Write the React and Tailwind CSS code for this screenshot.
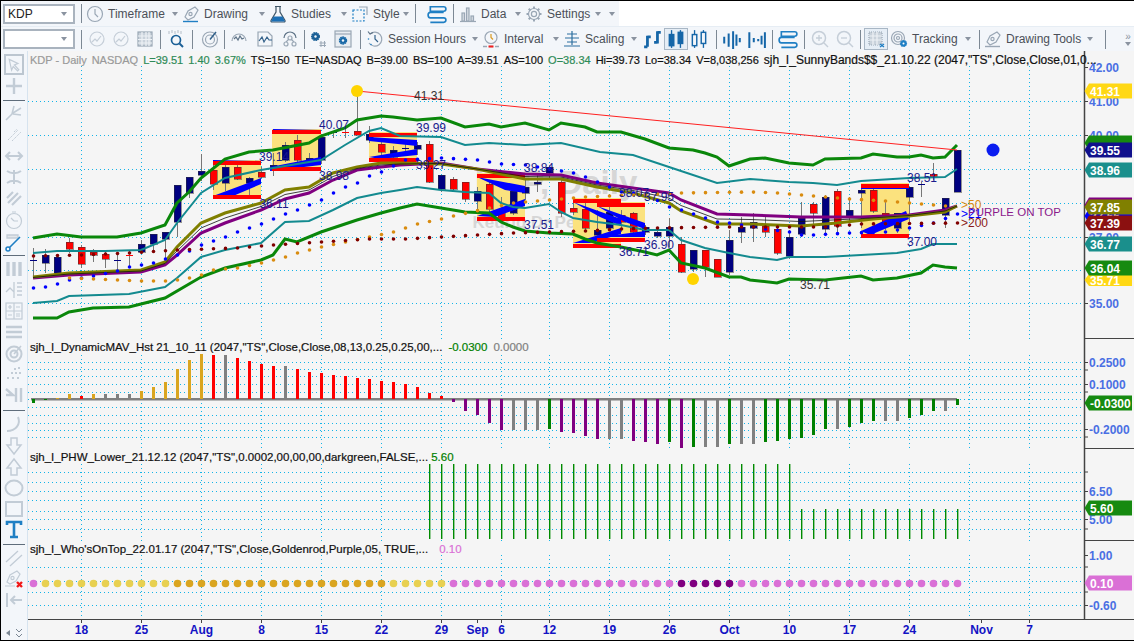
// App.jsx - charting workspace, KDP daily
const STEP = 12;
const barX = (i) => 33 + STEP * i;
const BARS = Array.from({ length: 78 }, (_, i) => i);

// piecewise line through [x, y] points
function lerp(pts, x) {
  if (x <= pts[0][0]) return pts[0][1];
  for (let k = 1; k < pts.length; k++) {
    if (x <= pts[k][0]) {
      const [x0, y0] = pts[k - 1];
      const [x1, y1] = pts[k];
      return y0 + ((y1 - y0) * (x - x0)) / (x1 - x0);
    }
  }
  return pts[pts.length - 1][1];
}

const toPoints = (pts) => pts.map((p) => p.join(",")).join(" ");

const upperGreen = [[33,238],[57,234],[81,237],[117,237],[141,233],[165,225],[177,203],[189,192],[201,178],[225,159],[249,152],[273,150],[309,143],[321,136],[345,128],[357,120],[381,116],[393,117],[417,120],[441,118],[465,127],[489,124],[501,127],[525,123],[549,130],[561,123],[585,127],[597,132],[621,132],[645,139],[669,148],[693,150],[705,153],[717,157],[729,166],[741,162],[750,159],[765,158],[789,163],[813,165],[825,159],[861,158],[873,154],[897,157],[909,157],[921,155],[933,158],[945,157],[957,145]];
const upperTeal = [[33,253],[57,251],[105,251],[141,250],[165,240],[177,223],[201,193],[225,178],[261,170],[321,160],[345,145],[369,131],[381,128],[400,136],[441,137],[465,145],[489,143],[525,145],[561,143],[600,152],[633,155],[669,167],[717,183],[750,179],[789,182],[813,183],[837,185],[861,181],[909,178],[945,177],[957,169]];
const lowerTeal = [[33,303],[57,301],[69,296],[129,294],[165,287],[177,278],[201,257],[225,250],[261,243],[285,222],[309,221],[333,210],[357,198],[381,193],[400,190],[417,187],[441,190],[465,192],[489,193],[501,203],[513,207],[525,208],[549,204],[561,212],[573,218],[597,222],[621,225],[645,230],[669,230],[681,240],[705,248],[729,253],[750,257],[777,260],[789,257],[825,257],[861,255],[897,253],[921,249],[933,244],[957,244]];
const lowerGreen = [[33,318],[57,318],[69,312],[93,308],[129,307],[165,298],[201,277],[225,268],[261,260],[273,255],[285,239],[297,242],[321,232],[357,220],[381,213],[400,208],[417,204],[441,208],[465,212],[489,213],[501,222],[513,227],[525,231],[549,233],[573,234],[585,239],[597,243],[621,247],[645,252],[657,255],[669,250],[681,263],[705,268],[729,277],[741,277],[750,280],[777,283],[789,279],[825,280],[861,276],[873,280],[897,278],[921,273],[933,265],[945,267],[957,268]];
const olive = [[33,277],[69,273],[141,270],[165,262],[177,247],[201,223],[225,213],[261,203],[285,190],[309,187],[333,173],[357,167],[381,163],[400,163],[441,164],[477,169],[525,179],[561,179],[597,187],[633,193],[669,203],[681,211],[717,224],[750,224],[801,226],[837,223],[873,219],[909,216],[945,212],[957,206]];
const purple = [[33,278],[69,275],[141,272],[165,265],[177,255],[201,233],[225,223],[261,210],[285,199],[309,193],[333,180],[357,170],[381,167],[400,165],[441,163],[477,169],[525,174],[561,175],[597,183],[633,188],[669,193],[681,200],[717,214],[750,215],[801,217],[861,217],[909,215],[945,210],[957,206]];
const blueDots = [[33,288],[45,287],[57,284],[69,280],[81,278],[93,276],[117,271],[129,267],[141,265],[153,263],[177,255],[189,251],[201,245],[213,241],[225,237],[237,232],[249,228],[261,224],[273,219],[285,214],[297,210],[309,205],[321,200],[333,193],[345,187],[357,183],[369,176],[381,172],[405,160],[441,158],[477,160],[501,164],[525,165],[549,169],[573,173],[585,177],[597,182],[609,187],[621,192],[645,194],[669,207],[681,210],[717,222],[729,223],[765,229],[789,232],[801,235],[813,235],[849,233],[885,232],[909,228],[933,223],[957,214]];
const orangeDots = [[69,278],[93,279],[117,280],[141,281],[165,281],[177,280],[189,278],[201,275],[213,270],[237,268],[261,263],[285,257],[297,253],[321,247],[345,242],[369,237],[393,232],[405,228],[417,224],[441,219],[453,216],[489,208],[513,203],[549,200],[585,197],[633,195],[681,193],[750,192],[777,193],[813,196],[849,199],[885,201],[921,204],[945,206]];
const maroonDots = [[33,256],[81,255],[129,253],[177,250],[237,248],[273,245],[321,242],[369,239],[405,239],[441,237],[477,235],[513,233],[549,232],[585,231],[621,229],[657,228],[729,227],[825,227],[861,224],[957,223]];

// [bar, colour n/r, wickTop, bodyTop, bodyBottom, wickBottom]
const candles = [
  [0,"n",248,260,261,276],[1,"n",249,255,263,273],[2,"n",254,257,273,274],[3,"r",238,242,249,253],
  [4,"r",245,247,264,268],[5,"r",249,252,255,262],[6,"r",251,254,259,268],[7,"n",252,260,261,271],
  [8,"r",250,255,256,268],[9,"n",240,244,252,254],[10,"n",234,234,244,251],[11,"n",232,232,239,262],
  [12,"n",185,185,222,237],[13,"n",177,177,193,198],[14,"n",154,171,175,181],[15,"r",160,170,184,190],
  [16,"n",162,167,183,191],[17,"r",163,167,179,180],[18,"n",177,178,183,196],[19,"r",167,172,177,178],
  [20,"n",153,165,170,176],[21,"n",142,145,160,162],[22,"r",135,140,160,162],[23,"n",153,158,162,164],
  [24,"n",134,137,160,164],[25,"n",131,132,133,138],[26,"r",128,132,133,138],[27,"r",95,131,135,135],
  [28,"n",126,134,140,143],[29,"r",140,144,152,155],[30,"n",146,150,157,160],[31,"n",143,148,149,155],
  [32,"n",142,145,149,155],[33,"r",141,144,182,183],[34,"n",175,175,189,192],[35,"r",177,179,189,190],
  [36,"r",182,182,199,202],[37,"n",187,191,201,213],[38,"r",182,184,209,212],[39,"r",197,212,218,218],
  [40,"n",187,191,213,215],[41,"n",180,187,193,200],[42,"n",175,182,184,192],[43,"n",165,167,173,180],
  [44,"r",180,182,213,217],[45,"r",197,208,212,215],[46,"r",203,209,228,230],[47,"n",210,230,235,239],
  [48,"n",205,212,228,230],[49,"r",210,215,222,232],[50,"r",212,213,232,233],[51,"n",225,227,232,235],
  [52,"n",227,232,236,238],[53,"n",218,227,236,247],[54,"r",237,244,272,273],[55,"n",250,250,269,272],
  [56,"r",250,250,267,277],[57,"r",259,259,277,277],[58,"n",230,240,272,275],[59,"n",217,227,232,243],
  [60,"n",213,222,228,242],[61,"r",217,226,232,237],[62,"r",227,229,253,255],[63,"n",230,237,256,259],
  [64,"n",202,218,234,237],[65,"r",202,204,213,227],[66,"n",195,197,229,233],[67,"r",189,191,226,232],
  [68,"n",197,210,216,223],[69,"n",187,190,193,228],[70,"r",188,190,211,213],[71,"r",200,213,226,230],
  [72,"n",213,213,228,233],[73,"n",187,187,197,223],[74,"n",182,184,185,197],[75,"r",163,174,177,180],
  [76,"n",198,198,215,228],[77,"n",150,150,192,192],
];

// signal boxes: x1, x2, top, bottom and the blue wedges on them
const boxes = [
  { x: [213,261], y: [160,199], top: "213,160 261,161 213,163", low: "213,196 261,178 261,184 226,199" },
  { x: [272,321], y: [129,171], top: "273,129 321,130 273,131", low: "270,167 321,157 321,165 270,171" },
  { x: [369,417], y: [132,162], top: "369,137 417,140 417,146 369,141", low: "369,157 417,149 417,155 380,159" },
  { x: [477,525], y: [173,221], top: "477,177 525,186 525,193 505,190", low: "477,216 525,199 525,206 495,217" },
  { x: [573,621], y: [198,248], top: "573,202 621,219 621,226 600,217", low: "573,243 621,228 621,234 590,243" },
  { x: [597,645], y: [202,242], top: "597,206 645,223 645,229 625,222", low: "600,237 645,231 645,237 610,237" },
  { x: [861,909], y: [183,238], top: "861,187 909,187 909,189 861,189", low: "861,231 906,211 909,219 870,235" },
];

const chartLabels = [
  ["41.31",429,96,"#333333"],["40.07",334,125,"#1a1a8c"],["39.14",274,157,"#1a1a8c"],["38.98",334,176,"#1a1a8c"],
  ["36.11",274,204,"#1a1a8c"],["39.99",431,128,"#1a1a8c"],["39.27",431,165,"#1a1a8c"],["38.84",539,168,"#1a1a8c"],
  ["37.51",539,225,"#1a1a8c"],["38.07",634,193,"#1a1a8c"],["37.95",659,197,"#1a1a8c"],["36.90",659,245,"#1a1a8c"],
  ["36.71",634,252,"#1a1a8c"],["38.51",922,178,"#1a1a8c"],["37.00",922,242,"#1a1a8c"],["35.71",815,285,"#333333"],
];

const mavColor = { g: "#008000", o: "#daa520", r: "#ff0000", y: "#808080", p: "#800080" };
// one entry per bar: colour + height above (+) or below (-) the zero line
const mavBars = [
  ["g",-4],["g",-1],["o",1],["o",5],["r",3],["o",5],["y",5],["y",5],["y",5],["o",8],["o",12],["o",17],["o",30],["o",39],["o",45],
  ["r",44],["y",44],["r",41],["r",38],["r",35],["r",33],["y",33],["r",30],["r",27],["r",26],["r",24],["r",23],["r",21],["r",20],
  ["r",18],["r",17],["r",15],["r",12],["r",6],["r",3],["p",-3],["p",-12],["p",-16],["p",-24],["p",-31],["y",-31],["y",-31],["y",-31],
  ["g",-30],["p",-33],["p",-34],["p",-37],["p",-40],["y",-40],["y",-40],["p",-42],["p",-43],["p",-45],["g",-43],["p",-49],["g",-48],
  ["y",-48],["y",-48],["g",-45],["y",-45],["y",-45],["g",-43],["g",-42],["g",-40],["g",-39],["g",-36],["g",-30],["y",-30],["g",-28],
  ["g",-24],["g",-22],["y",-22],["y",-22],["g",-19],["g",-16],["g",-12],["y",-12],["g",-6],
];

const GRID_X = [81,141,201,261,321,381,441,501,549,609,669,729,789,849,909,969,1029];
const DATES = [["18",81],["25",141],["Aug",201],["8",261],["15",321],["22",381],["29",441],["Sep",477],["6",501],["12",549],["19",609],["26",669],["Oct",729],["10",789],["17",849],["24",909],["Nov",981],["7",1029]];

function Grid({ rows, top, bottom }) {
  return (
    <g stroke="#14b4e8" strokeWidth="1" strokeDasharray="1 3" shapeRendering="crispEdges">
      {rows.map((y) => <line key={y} x1="28" x2="1084" y1={y + 0.5} y2={y + 0.5} />)}
      {GRID_X.map((x) => <line key={x} x1={x + 0.5} x2={x + 0.5} y1={top} y2={bottom} />)}
    </g>
  );
}

function AxisLabels({ items }) {
  return items.map(([t, y]) => (
    <g key={t}>
      <line x1="1084" x2="1088" y1={y + 0.5} y2={y + 0.5} stroke="#444" shapeRendering="crispEdges" />
      <text x="1089" y={y + 4.5} fontSize="12" fontWeight="700" fill="#4a6fe3">{t}</text>
    </g>
  ));
}

function Tag({ y, fill, text, h = 15 }) {
  const t = y - h / 2;
  return (
    <g>
      <polygon points={`1084.5,${y} 1089,${t} 1132,${t} 1132,${t + h} 1089,${t + h}`} fill={fill} />
      {text && <text x="1090" y={y + 4.5} fontSize="12" fontWeight="700" fill="#ffffff">{text}</text>}
    </g>
  );
}

const AxisLine = ({ y1, y2 }) => (
  <line x1="1084.5" x2="1084.5" y1={y1} y2={y2} stroke="#444" strokeWidth="1.5" />
);

function Candle({ c }) {
  const [i, col, wt, bt, bb, wb] = c;
  const x = barX(i);
  const fill = col === "r" ? "#ff0000" : "#000080";
  const doji = bb - bt <= 1;
  return (
    <g shapeRendering="crispEdges">
      <line x1={x + 0.5} x2={x + 0.5} y1={wt} y2={wb} stroke="#777" />
      {doji ? (
        <line x1={x - 3} x2={x + 4} y1={bt + 0.5} y2={bt + 0.5} stroke={fill} />
      ) : (
        <rect x={x - 3} y={bt} width="7" height={bb - bt} fill={fill} stroke="#333" strokeWidth="0.5" />
      )}
    </g>
  );
}

function MainChart() {
  return (
    <svg viewBox="28 51 1106 288" className="block w-full h-full" fontFamily="'Liberation Sans', Arial, sans-serif">
      <Grid rows={[101,135,169,203,237,270,303]} top={66} bottom={339} />
      <text x="556" y="194" textAnchor="middle" fontSize="33" fontWeight="700" fill="#d6d6d6">KDP, Daily</text>
      <text x="557" y="228" textAnchor="middle" fontSize="17" fontWeight="700" fill="#d6d6d6">Keurig Dr Pepper Inc</text>

      {boxes.map((b) => (
        <rect key={b.x[0]} x={b.x[0]} y={b.y[0]} width={b.x[1] - b.x[0]} height={b.y[1] - b.y[0]} fill="#fbe27e" />
      ))}
      {candles.map((c) => <Candle key={c[0]} c={c} />)}
      {boxes.map((b) => (
        <g key={b.x[0]}>
          <polygon points={b.top} fill="#0000ff" />
          <polygon points={b.low} fill="#0000ff" />
          <rect x={b.x[0]} y={b.y[0] + 1} width={b.x[1] - b.x[0]} height="4" fill="#ff0000" />
          <rect x={b.x[0]} y={b.y[1] - 4} width={b.x[1] - b.x[0]} height="4" fill="#ff0000" />
        </g>
      ))}

      <polyline points={toPoints(upperGreen)} fill="none" stroke="#0a870a" strokeWidth="3" />
      <polyline points={toPoints(lowerGreen)} fill="none" stroke="#0a870a" strokeWidth="3" />
      <polyline points={toPoints(upperTeal)} fill="none" stroke="#138a8f" strokeWidth="2" />
      <polyline points={toPoints(lowerTeal)} fill="none" stroke="#138a8f" strokeWidth="2" />
      <polyline points={toPoints(purple)} fill="none" stroke="#800080" strokeWidth="3" />
      <polyline points={toPoints(olive)} fill="none" stroke="#808000" strokeWidth="3" />
      <polyline points={toPoints(purple.map(([x, y]) => [x, (y + lerp(olive, x)) / 2]))} fill="none" stroke="#111" strokeWidth="0.8" />

      {BARS.map((i) => <circle key={i} cx={barX(i) + 0.5} cy={lerp(blueDots, barX(i))} r="1.8" fill="#0000ff" />)}
      {BARS.filter((i) => i >= 3 && i < 77).map((i) => <circle key={i} cx={barX(i) + 0.5} cy={lerp(orangeDots, barX(i))} r="1.8" fill="#d98c10" />)}
      {BARS.map((i) => <circle key={i} cx={barX(i) + 0.5} cy={lerp(maroonDots, barX(i))} r="1.8" fill="#800000" />)}

      <line x1="357" y1="91" x2="957" y2="150" stroke="#ff2020" strokeWidth="1" />
      <line x1="357.5" y1="91" x2="357.5" y2="100" stroke="#777" />
      <circle cx="357" cy="91" r="6" fill="#ffd400" />
      <circle cx="693" cy="279" r="6" fill="#ffd400" />
      <circle cx="993" cy="150" r="6.5" fill="#0a1cf0" />

      {chartLabels.map(([t, x, y, c]) => (
        <text key={t + x} x={x} y={y + 4} textAnchor="middle" fontSize="12" fill={c}>{t}</text>
      ))}
      <text x="961" y="209" fontSize="12" fill="#d98c10">&gt;50</text>
      <text x="961" y="218" fontSize="12" fill="#0000ff">&gt;21</text>
      <text x="968" y="216" fontSize="11.5" fill="#8b1a8b">PURPLE ON TOP</text>
      <text x="961" y="227" fontSize="12" fill="#8b1a1a">&gt;200</text>

      <AxisLine y1={51} y2={339} />
      <AxisLabels items={[["42.00",67],["41.00",101],["40.00",135],["37.00",237],["35.00",303]]} />
      <Tag y={91} fill="#ffd814" text="41.31" />
      <Tag y={143} fill="#168a10" />
      <Tag y={150} fill="#10108c" text="39.55" />
      <Tag y={170} fill="#1a8f8c" text="38.96" />
      <Tag y={205} fill="#800080" />
      <Tag y={216} fill="#0000ff" text="37.66" />
      <Tag y={223} fill="#8b1010" text="37.39" />
      <Tag y={207} fill="#808000" text="37.85" />
      <Tag y={244} fill="#1a8f8c" text="36.77" />
      <Tag y={280} fill="#ffd814" text="35.71" h={12} />
      <Tag y={268} fill="#168a10" text="36.04" />
      <line x1="1084" x2="1134" y1="338.5" y2="338.5" stroke="#444" />
    </svg>
  );
}

function MavChart() {
  return (
    <svg viewBox="28 339 1106 110" className="block w-full h-full" fontFamily="'Liberation Sans', Arial, sans-serif">
      <Grid rows={[362,369,376,384,392,399,407,415,423,430,437]} top={355} bottom={449} />
      <rect x="31" y="398" width="926" height="2.5" fill="#808080" />
      {mavBars.map(([c, v], i) => (
        <rect key={i} x={barX(i) - 1} y={v > 0 ? 399 - v : 399} width="3" height={Math.abs(v)} fill={mavColor[c]} />
      ))}
      <AxisLine y1={339} y2={449} />
      <AxisLabels items={[["0.2500",362],["0.1000",384],["-0.2000",429]]} />
      <line x1="1084" x2="1088" y1="370" y2="370" stroke="#444" />
      <line x1="1084" x2="1088" y1="392" y2="392" stroke="#444" />
      <line x1="1084" x2="1088" y1="437" y2="437" stroke="#444" />
      <Tag y={403} fill="#168a10" text="-0.0300" />
      <line x1="1084" x2="1134" y1="448.5" y2="448.5" stroke="#444" />
    </svg>
  );
}

function PhwChart() {
  return (
    <svg viewBox="28 449 1106 92" className="block w-full h-full" fontFamily="'Liberation Sans', Arial, sans-serif">
      <Grid rows={[472,482,491,500,511,519,529]} top={464} bottom={541} />
      {BARS.filter((i) => i >= 33).map((i) => (
        <rect key={i} x={barX(i)} width="1.4" y={i <= 63 ? 464 : 509} height={i <= 63 ? 75 : 30} fill="#008a00" />
      ))}
      <AxisLine y1={449} y2={541} />
      <AxisLabels items={[["6.50",491],["5.00",519]]} />
      <line x1="1084" x2="1088" y1="472" y2="472" stroke="#444" />
      <line x1="1084" x2="1088" y1="529" y2="529" stroke="#444" />
      <Tag y={508} fill="#168a10" text="5.60" />
      <line x1="1084" x2="1134" y1="540.5" y2="540.5" stroke="#444" />
    </svg>
  );
}

function dotColor(i) {
  if (i === 0) return "#da70d6";
  if (i <= 11) return "#e8d050";
  if (i <= 29) return "#daa520";
  if (i <= 34) return "#e8d050";
  if (i >= 54 && i <= 58) return "#800080";
  return "#da70d6";
}

function WhoChart() {
  return (
    <svg viewBox="28 541 1106 78" className="block w-full h-full" fontFamily="'Liberation Sans', Arial, sans-serif">
      <Grid rows={[567,581,592,605]} top={555} bottom={619} />
      {BARS.map((i) => <circle key={i} cx={barX(i) + 0.5} cy="583.5" r="3.8" fill={dotColor(i)} />)}
      <AxisLine y1={541} y2={619} />
      <AxisLabels items={[["1.00",555],["-0.60",605]]} />
      <line x1="1084" x2="1088" y1="567" y2="567" stroke="#444" />
      <line x1="1084" x2="1088" y1="592" y2="592" stroke="#444" />
      <Tag y={583} fill="#da70d6" text="0.10" />
    </svg>
  );
}

function DateAxis() {
  return (
    <svg viewBox="28 619 1106 21" className="block w-full h-full" fontFamily="'Liberation Sans', Arial, sans-serif">
      <line x1="28" x2="1134" y1="619.5" y2="619.5" stroke="#444" />
      {DATES.map(([t, x]) => (
        <g key={t}>
          <line x1={x + 0.5} x2={x + 0.5} y1="619" y2="623" stroke="#444" />
          <text x={x + 0.5} y="634" textAnchor="middle" fontSize="12" fontWeight="700" fill="#1212c4">{t}</text>
        </g>
      ))}
    </svg>
  );
}

// --- toolbar icons ---
const G = "#9aa7b5";
const Bl = "#1f7fc4";

function Ico({ children, w = 18, h = 18 }) {
  return (
    <svg viewBox="0 0 18 18" width={w} height={h} fill="none" stroke={G} strokeWidth="1.2" className="shrink-0">
      {children}
    </svg>
  );
}

const ClockIco = () => <Ico><circle cx="9" cy="9" r="7.5" /><path d="M9 4v5l3 3" /></Ico>;
const PenIco = ({ mark = Bl }) => (
  <Ico>
    <path d="M3 12 6 6l7-4 3 3-4 7-6 3z" />
    <circle cx="8.5" cy="9" r="1.6" />
    <path d="M1 16.5h15" stroke={mark} strokeWidth="1.4" />
  </Ico>
);
const FlaskIco = () => (
  <Ico>
    <path d="M6 1.5h6M7 2v5L2 15.5q-.3 1.5 1 1.5h12q1.3 0 1-1.5L11 7V2" stroke="#3f5566" />
    <path d="M4.5 11.5h9L16 16.5H2z" fill="#1b6fb5" stroke="none" />
  </Ico>
);
const StyleIco = () => (
  <Ico>
    <rect x="2" y="5" width="11" height="11" stroke={Bl} strokeDasharray="2 1.5" />
    <path d="M8 2h8v8" stroke="#9aa7b5" />
  </Ico>
);
const LayersIco = () => (
  <Ico w={20} h={20}>
    <path d="M3 2.5h12q2 0 2 2t-2 2H3zM15 7.5H3q-2 0-2 2.5t2 2.5h12M3 12.5h12q2 0 2 2t-2 2H3" stroke={Bl} strokeWidth="1.5" />
  </Ico>
);
const DataIco = () => (
  <Ico>
    <path d="M1 16.5h16" />
    <rect x="3" y="8" width="2.5" height="8" fill="#d5dbe2" />
    <rect x="7.5" y="3" width="2.5" height="13" fill="#d5dbe2" />
    <rect x="12" y="11" width="2.5" height="5" fill="#d5dbe2" />
  </Ico>
);
const CogIco = ({ c = G }) => (
  <Ico>
    <circle cx="9" cy="9" r="2.6" stroke={c} />
    <path d="M9 1.5v2.5M9 14v2.5M1.5 9H4M14 9h2.500M3.700 3.700l1.800 1.800M12.500 12.500l1.800 1.800M14.300 3.700l-1.800 1.800M5.500 12.500l-1.800 1.800" stroke={c} strokeWidth="2" />
    <circle cx="9" cy="9" r="5.500" stroke={c} />
  </Ico>
);
const CircleChart = () => (
  <Ico>
    <circle cx="9" cy="9" r="7" stroke="#c5ced8" />
    <path d="M4 12l3-3 2 2 4-5" stroke="#c5ced8" />
  </Ico>
);
const CalIco = () => (
  <Ico>
    <rect x="2" y="2" width="14" height="14" fill="#c9d2db" />
    <path d="M2 6h14M2 9.500h14M2 13h14M6 2v14M10 2v14M13 2v14" stroke="#eef2f6" />
  </Ico>
);
const SearchData = () => (
  <Ico>
    <path d="M1 1v3M4 0v3M7 1v3M10 0v3M13 1v3" stroke="#b4bdc7" strokeWidth="1" />
    <circle cx="8" cy="10" r="4.500" stroke="#1a5f96" strokeWidth="1.700" />
    <path d="M11.500 13.500 15 17" stroke="#1a5f96" strokeWidth="2" />
  </Ico>
);
const GaugeIco = () => (
  <Ico>
    <circle cx="9" cy="9.500" r="7.500" />
    <circle cx="9" cy="9.500" r="4.500" />
    <path d="M9 9.500 15 2" stroke="#33618a" strokeWidth="1.500" />
  </Ico>
);
const WaveIco = () => (
  <Ico>
    <path d="M2 11a7 7 0 0 1 14 0" />
    <path d="M4 9l2-2 2 3 2-4 2 3 2-1" stroke="#5e7387" />
  </Ico>
);
const DocChart = () => (
  <Ico>
    <path d="M2 2h10l4 4v10H2z" />
    <path d="M3 11l3-4 2 5 3-5 2 3h3" stroke="#33618a" />
  </Ico>
);
const NodesIco = () => (
  <Ico>
    <circle cx="5" cy="14" r="2" /><circle cx="13" cy="14" r="2" /><circle cx="9" cy="8" r="2" />
    <path d="M3 8a6 6 0 0 1 12 0" stroke="#5e7387" /><path d="M5 12l3-3M13 12l-3-3" />
  </Ico>
);
const GearHash = () => (
  <Ico>
    <circle cx="6.500" cy="6.500" r="3.500" fill="#1a5f96" stroke="#1a5f96" strokeDasharray="1.500 .5" strokeWidth="2" />
    <circle cx="6.500" cy="6.500" r="1.200" fill="#f3f6fa" stroke="none" />
    <path d="M12 11v6M15.500 11v6M10.500 13h6.500M10.500 15.500h6.500" strokeWidth="1" />
  </Ico>
);
const GearBox = () => (
  <Ico>
    <rect x="1" y="1" width="16" height="16" fill="#e8edf2" />
    <path d="M1 4h16" />
    <circle cx="9" cy="10.500" r="3.200" fill="#1a6aa8" stroke="#1a6aa8" strokeDasharray="1.500 .5" strokeWidth="2" />
    <circle cx="9" cy="10.500" r="1.200" fill="#f3f6fa" stroke="none" />
  </Ico>
);
const SessionIco = () => (
  <Ico>
    <path d="M4 4A7 7 0 1 1 3 13" />
    <path d="M2 1.500 4 4 7 2.500" stroke="#5e7387" />
    <path d="M9 5v4l3 3" stroke="#33618a" />
    <circle cx="2.500" cy="9" r=".8" fill="#1f7fc4" stroke="none" />
    <circle cx="5" cy="14.500" r=".8" fill="#1f7fc4" stroke="none" />
  </Ico>
);
const IntervalIco = () => (
  <Ico>
    <circle cx="9" cy="7.500" r="6" /><path d="M9 4v3.500l2 2" stroke="#d99a20" />
    <path d="M1 16.500h4M7 16.500h4" stroke="#9aa7b5" strokeWidth="1.500" /><path d="M6.500 16.500h5" stroke="#f02020" strokeWidth="2" />
    <path d="M13 16.500h4" stroke="#9aa7b5" strokeWidth="1.500" />
  </Ico>
);
const ScalingIco = () => (
  <Ico>
    <path d="M9 1v14M4 4h10M2 8h14M4 12h10M1 16h16" stroke="#2c6f9f" />
  </Ico>
);
const BarsIco = () => (
  <Ico w={20} h={20}>
    <path d="M4 16V6M4 16H1M4 7h3M13 13V2M13 3h3M13 12h-3" stroke="#1566a8" strokeWidth="2.500" />
  </Ico>
);
const Candles = ({ filled }) => (
  <Ico w={20} h={20}>
    {[3, 11].map((x) => (
      <g key={x}>
        <path d={`M${x + 2} 1v16`} stroke="#1566a8" />
        <rect x={x} y={x === 3 ? 5 : 3} width="4" height="10" fill={filled ? "#1566a8" : "#f3f6fa"} stroke="#1566a8" strokeWidth="1.300" />
      </g>
    ))}
  </Ico>
);
const VolBars = ({ d }) => (
  <Ico w={20} h={20}><path d={d} stroke="#1566a8" strokeWidth="1.800" /></Ico>
);
const ZoomIco = ({ plus }) => (
  <Ico>
    <circle cx="8" cy="8" r="6.500" stroke="#c5ced8" strokeWidth="1.500" />
    <path d={plus ? "M5 8h6M8 5v6" : "M5 8h6"} stroke="#c5ced8" strokeWidth="1.300" />
    <path d="M13 13l4 4" stroke="#c5ced8" strokeWidth="1.500" />
  </Ico>
);
const GridSel = () => (
  <Ico>
    <rect x="2" y="2" width="13" height="13" fill="#c9d2db" strokeDasharray="1 1" />
    <path d="M2 6h13M2 10h13M6 2v13M10 2v13" stroke="#eef2f6" />
    <path d="M13 14l4 3M17 14l-4 3" stroke="#1f7fc4" strokeWidth="1.300" />
  </Ico>
);
const TrackIco = () => (
  <Ico>
    <circle cx="8" cy="8" r="6.500" /><circle cx="8" cy="8" r="4" /><circle cx="8" cy="8" r="1.500" />
    <circle cx="13.500" cy="13.500" r="3" fill="#1f7fc4" stroke="#1f7fc4" strokeDasharray="1 .5" />
    <circle cx="13.500" cy="13.500" r="1" fill="#fff" stroke="none" />
  </Ico>
);

const Caret = ({ className = "" }) => (
  <svg viewBox="0 0 6 4" width="6" height="4" className={`shrink-0 ${className}`}>
    <path d="M0 0h6L3 4z" fill="#8a93a0" />
  </svg>
);

const VSep = ({ className = "" }) => <div className={`h-[19px] w-px bg-[#7c8894] shrink-0 ${className}`} />;

function Combo({ value }) {
  return (
    <div className="ml-[2px] w-[72px] h-[20px] bg-white border-2 border-[#a9b3be] flex items-center pl-[3px] pr-[6px] text-[12px] text-[#222] shrink-0">
      <span>{value}</span>
      <Caret className="ml-auto" />
    </div>
  );
}

function Tool({ icon, label, w }) {
  return (
    <div className={`flex items-center h-full shrink-0 text-[12px] text-[#4b5058] ${w}`}>
      {icon}
      <span className="ml-[4px] whitespace-nowrap">{label}</span>
      <Caret className="ml-auto mr-[4px]" />
    </div>
  );
}

const IconCell = ({ children, w = "w-[24px]", selected }) => (
  <div className={`flex items-center justify-center h-[22px] shrink-0 ${w} ${selected ? "border border-[#a8b6c4] bg-[#e6eef6]" : ""}`}>
    {children}
  </div>
);

function TopRow() {
  return (
    <div className="h-[25px] w-[618px] bg-[#f3f6fa] flex items-center">
      <Combo value="KDP" />
      <VSep className="ml-[6px] mr-[4px]" />
      <Tool icon={<ClockIco />} label="Timeframe" w="w-[96px]" />
      <Tool icon={<PenIco />} label="Drawing" w="w-[87px]" />
      <Tool icon={<FlaskIco />} label="Studies" w="w-[82px]" />
      <Tool icon={<StyleIco />} label="Style" w="w-[62px]" />
      <VSep className="ml-[2px] mr-[11px]" />
      <LayersIco />
      <VSep className="ml-[6px] mr-[5px]" />
      <Tool icon={<DataIco />} label="Data" w="w-[66px]" />
      <Tool icon={<CogIco />} label="Settings" w="w-[80px]" />
      <Caret className="ml-auto mr-[4px]" />
    </div>
  );
}

function SecondRow() {
  return (
    <div className="h-[24px] mt-px bg-[#f3f6fa] flex items-center">
      <Combo value="" />
      <VSep className="ml-[6px] mr-[3px]" />
      <IconCell><CircleChart /></IconCell>
      <IconCell><CircleChart /></IconCell>
      <IconCell><CalIco /></IconCell>
      <VSep className="ml-[3px] mr-[5px]" />
      <IconCell w="w-[22px]"><SearchData /></IconCell>
      <VSep className="ml-[4px] mr-[5px]" />
      <IconCell><GaugeIco /></IconCell>
      <VSep className="ml-[2px] mr-[2px]" />
      <IconCell><WaveIco /></IconCell>
      <IconCell w="w-[27px]"><DocChart /></IconCell>
      <IconCell><NodesIco /></IconCell>
      <VSep className="ml-[2px] mr-[1px]" />
      <IconCell><GearHash /></IconCell>
      <IconCell w="w-[26px]"><GearBox /></IconCell>
      <VSep className="ml-[4px] mr-[5px]" />
      <Tool icon={<SessionIco />} label="Session Hours" w="w-[116px]" />
      <Tool icon={<IntervalIco />} label="Interval" w="w-[81px]" />
      <Tool icon={<ScalingIco />} label="Scaling" w="w-[78px]" />
      <IconCell w="w-[23px]"><BarsIco /></IconCell>
      <IconCell w="w-[24px]" selected><Candles filled /></IconCell>
      <IconCell w="w-[22px]"><Candles /></IconCell>
      <VSep className="ml-[6px] mr-[3px]" />
      <IconCell><VolBars d="M2 7v6M6 4v12M10 2v16M13 5v10M16 8v4" /></IconCell>
      <IconCell><VolBars d="M3 3v14M7 8v4M11 9v2M14 6v8M17 3v14" /></IconCell>
      <VSep className="ml-[4px] mr-[5px]" />
      <LayersIco />
      <VSep className="ml-[6px] mr-[2px]" />
      <IconCell w="w-[25px]"><ZoomIco plus /></IconCell>
      <IconCell w="w-[25px]"><ZoomIco /></IconCell>
      <VSep className="ml-[3px] mr-[3px]" />
      <IconCell w="w-[24px]" selected><GridSel /></IconCell>
      <div className="w-[2px]" />
      <Tool icon={<TrackIco />} label="Tracking" w="w-[85px]" />
      <VSep className="ml-[4px] mr-[4px]" />
      <Tool icon={<PenIco mark="#9aa7b5" />} label="Drawing Tools" w="w-[113px]" />
      <VSep className="ml-[8px]" />
      <div className="ml-auto mr-[3px] flex flex-col items-center text-[10px] leading-[10px] text-[#8a93a0]">
        <span>»</span>
        <Caret />
      </div>
    </div>
  );
}

// --- left rail icons ---
const R = "#c2ccd6";
const RailIco = ({ children }) => (
  <svg viewBox="0 0 20 20" width="20" height="20" fill="none" stroke={R} strokeWidth="2">{children}</svg>
);
const railGroups = [
  [
    <path key="a" d="M4 3l11 5-4.500 2L16 16l-1.500 1.500-5.500-5.500-2 4.500z" strokeWidth="1.500" />,
    <path key="b" d="M10 2v16M2 10h16" strokeWidth="2.400" />,
  ],
  [
    <path key="a" d="M2 17l7-7M8 11l2-8M9 10l8-5M9 11l8 1" strokeWidth="1.600" />,
    <path key="b" d="M4 16 14 6M8 17 17 8M10 8l3-3" strokeWidth="1" strokeDasharray="1.500 .7" />,
    <path key="c" d="M3 10h14M6 6l-4 4 4 4M14 6l4 4-4 4" />,
    <path key="d" d="M10 3v14M3 4c4 3 10 3 14 0M3 16c4-3 10-3 14 0" />,
    <path key="e" d="M3 9l6-6M4 14 14 4M8 16 17 7" strokeWidth="2.200" />,
    <g key="f" strokeWidth="1.200"><circle cx="10" cy="11" r="7.500" /><path d="M8 2h4M10 11l-3-3M10 11h4" /></g>,
    <g key="g" strokeWidth="1.300">
      <path d="M3 3h11v3H3z" fill="#e2e6ea" />
      <path d="M16 5 5 16" stroke="#1f7fc4" strokeWidth="1.600" />
      <circle cx="4" cy="17" r="2" stroke="#1f7fc4" strokeWidth="1.500" />
    </g>,
  ],
  [
    <path key="a" d="M4 3v14M10 3v14M16 3v14" strokeWidth="3.400" />,
    <path key="b" d="M2 12l4-4 4 4V2M13 3h5M13 7h5M13 11h5M13 15h5M10 12v6" strokeWidth="1.300" />,
    <g key="c" strokeWidth="1.200"><rect x="2" y="2" width="16" height="16" /><path d="M10 2v16M2 10h16M4 6h4M6 4v4M12 6h4M4 14h4M12 13h4M12 15h4" /></g>,
    <path key="d" d="M2 5h16M2 10h16M2 15h16" strokeWidth="2.600" />,
    <g key="e" strokeWidth="2"><circle cx="10" cy="11" r="7.500" /><circle cx="10" cy="11" r="3.500" /><path d="M10 11l7-8" strokeWidth="1.500" /></g>,
    <path key="f" d="M11 4v2M15 3v2M8 8v2M12 8v2M16 8v2M4 13v2M9 13v2M14 13v2" strokeWidth="2" />,
    <path key="g" d="M2 4l7 6-7 0M12 3v14M17 3v14" strokeWidth="2.400" />,
  ],
  [
    <path key="a" d="M14 2c3 7-2 14-11 14" strokeWidth="2" />,
    <path key="b" d="M7 2h6v7h4l-7 9-7-9h4z" strokeWidth="1.500" />,
    <path key="c" d="M10 2l7 9h-4v7H7v-7H3z" strokeWidth="1.500" />,
    <ellipse key="d" cx="10" cy="10" rx="8.500" ry="7.500" strokeWidth="2" />,
    <rect key="e" x="2" y="3" width="16" height="14" strokeWidth="2" />,
    <g key="f">
      <path d="M3 5V2h14v3M10 2v15M6 17h8" stroke="#1f7fc4" strokeWidth="2.600" />
    </g>,
  ],
  [
    <path key="a" d="M2 14 14 3M6 18 18 7" strokeWidth="1.300" />,
    <g key="b" strokeWidth="1.200">
      <path d="M3 13 6 6l7-4 3 3-4 7-6 3zM1 17h10" />
      <circle cx="8.500" cy="9" r="1.600" />
      <path d="M13 13l5 5M18 13l-5 5" stroke="#f01818" strokeWidth="2.400" />
    </g>,
    <path key="c" d="M3 3v14M18 10H7M11 6l-4 4 4 4" />,
  ],
];

function RailItem({ h, selected, children }) {
  return (
    <div className={`flex items-center justify-center mx-[3px] shrink-0 ${h} ${selected ? "border-2 border-[#bcc6d0]" : ""}`}>
      <RailIco>{children}</RailIco>
    </div>
  );
}

const RailSep = ({ className }) => <div className={`h-px bg-[#5f6d7b] mx-[2px] shrink-0 ${className}`} />;

function Rail() {
  return (
    <div className="w-[27px] shrink-0 bg-[#f3f6fa] border-r border-[#d6e3ef] flex flex-col pt-[3px]">
      {railGroups[0].map((p, k) => <RailItem key={k} h="h-[21px]" selected={k === 0}>{p}</RailItem>)}
      <RailSep className="mt-[3.5px] mb-[1.5px]" />
      {railGroups[1].map((p, k) => <RailItem key={k} h="h-[21.5px]">{p}</RailItem>)}
      <RailSep className="mt-[2px] mb-[2.5px]" />
      {railGroups[2].map((p, k) => <RailItem key={k} h="h-[21px]">{p}</RailItem>)}
      <RailSep className="mt-[4.5px] mb-[3.5px]" />
      {railGroups[3].map((p, k) => <RailItem key={k} h="h-[21px]">{p}</RailItem>)}
      <RailSep className="mt-[3.5px] mb-[2.5px]" />
      {railGroups[4].map((p, k) => <RailItem key={k} h="h-[21px]">{p}</RailItem>)}
      <div className="mt-auto mb-[2px] flex items-center justify-center gap-[5px] text-[#7b8794]">
        <svg viewBox="0 0 4 6" width="4" height="6"><path d="M4 0v6L0 3z" fill="#7b8794" /></svg>
        <svg viewBox="0 0 8 10" width="8" height="10" fill="none" stroke="#7b8794"><path d="M1 1l3 3 3-3M1 6l3 3 3-3" /></svg>
      </div>
    </div>
  );
}

function Legend() {
  const gr = "text-[#9a9a9a]";
  const gn = "text-[#2e8b57]";
  return (
    <div className="absolute left-[2px] top-0 flex items-baseline gap-[5px] text-[11px] whitespace-nowrap text-[#111] [-webkit-text-stroke:0.2px]">
      <span className={gr}>KDP - Daily</span>
      <span className={gr}>NASDAQ</span>
      <span className={gn}>L=39.51</span>
      <span className={gn}>1.40</span>
      <span className={gn}>3.67%</span>
      <span>TS=150</span>
      <span>TE=NASDAQ</span>
      <span>B=39.00</span>
      <span>BS=100</span>
      <span>A=39.51</span>
      <span>AS=100</span>
      <span className={gn}>O=38.34</span>
      <span>Hi=39.73</span>
      <span>Lo=38.34</span>
      <span>V=8,038,256</span>
      <span className="text-[12px]">sjh_I_SunnyBands$$_21.10.22 (2047,"TS",Close,Close,01,0...</span>
    </div>
  );
}

function StudyTitle({ title, values, gap }) {
  return (
    <div className={`absolute left-[2px] top-0 flex text-[11.5px] whitespace-nowrap text-[#111] [-webkit-text-stroke:0.2px] ${gap}`}>
      <span>{title}</span>
      {values}
    </div>
  );
}

export default function App() {
  return (
    <div className="w-[1134px] h-[641px] overflow-hidden bg-white border-t border-b border-l border-black flex flex-col font-['Liberation_Sans',Arial,sans-serif]">
      <div className="bg-[#e6edf4] shrink-0">
        <div className="bg-white">
          <TopRow />
        </div>
        <SecondRow />
      </div>
      <div className="flex-1 flex min-h-0">
        <Rail />
        <div className="flex-1 flex flex-col min-w-0 bg-[#f5f5f5]">
          <div className="relative h-[288px]">
            <MainChart />
            <Legend />
          </div>
          <div className="relative h-[110px]">
            <MavChart />
            <StudyTitle
              gap="gap-[6px]"
              title={'sjh_I_DynamicMAV_Hst 21_10_11 (2047,"TS",Close,Close,08,13,0.25,0.25,00,...'}
              values={
                <>
                  <span className="text-[#008000]">-0.0300</span>
                  <span className="text-[#808080]">0.0000</span>
                </>
              }
            />
          </div>
          <div className="relative h-[92px]">
            <PhwChart />
            <StudyTitle
              gap="gap-[3px]"
              title={'sjh_I_PHW_Lower_21.12.12 (2047,"TS",0.0002,00,00,00,darkgreen,FALSE,...'}
              values={<span className="text-[#008000]">5.60</span>}
            />
          </div>
          <div className="relative h-[78px]">
            <WhoChart />
            <StudyTitle
              gap="gap-[11px]"
              title={'sjh_I_Who\'sOnTop_22.01.17 (2047,"TS",Close,Goldenrod,Purple,05, TRUE,...'}
              values={<span className="text-[#da70d6]">0.10</span>}
            />
          </div>
          <div className="h-[21px]">
            <DateAxis />
          </div>
        </div>
      </div>
    </div>
  );
}
